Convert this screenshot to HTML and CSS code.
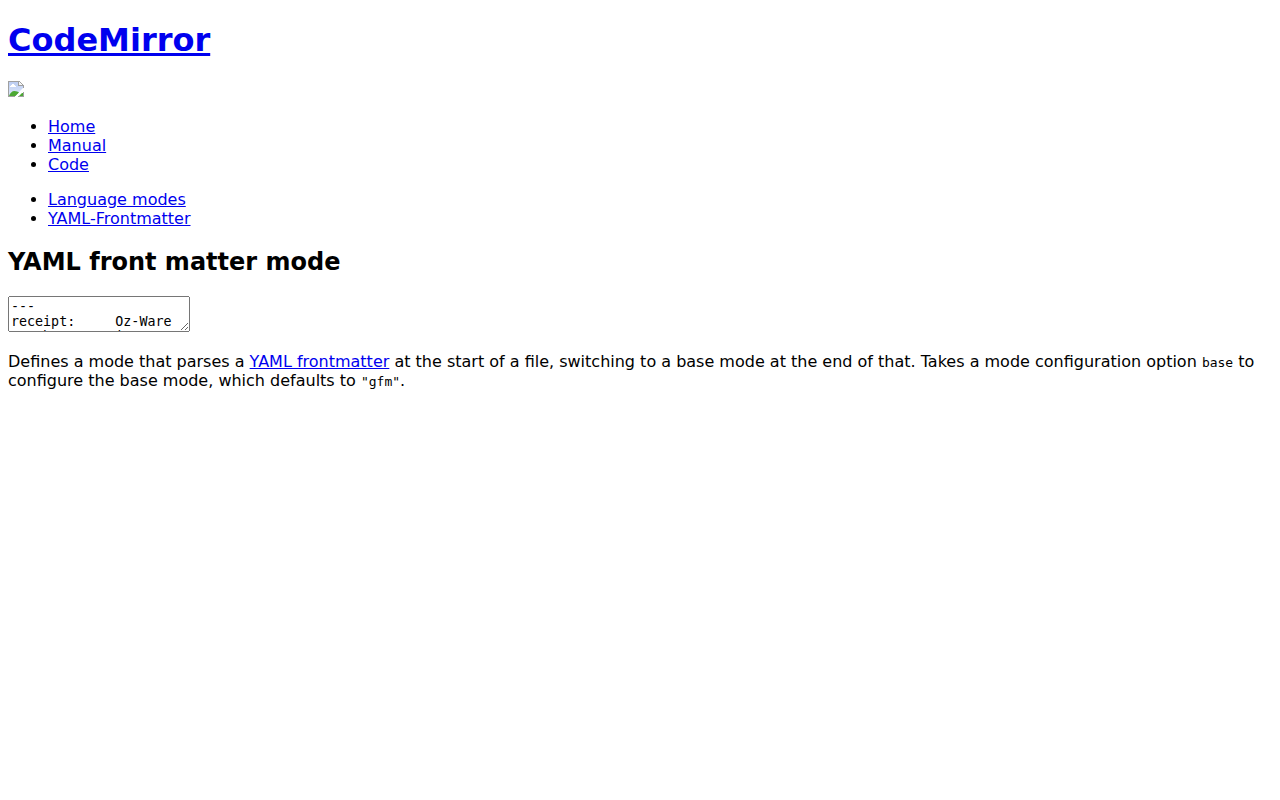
FILE: index.html
```html
<!DOCTYPE html>
<html lang="en">
<head>
<meta charset="utf-8">
<title>CodeMirror: YAML front matter mode</title>
<link rel="stylesheet" href="styles.css">
</head>
<body class="page">
<nav>
  <h1 class="title"><a href="#home">CodeMirror</a></h1>
  <a href="#home" aria-label="Home"><svg class="logo" viewBox="0 0 16 16" aria-hidden="true">
    <defs>
      <linearGradient id="sky" x1="0" y1="0" x2="0" y2="1">
        <stop offset="0" stop-color="#bccdf2"/>
        <stop offset="1" stop-color="#dde7fa"/>
      </linearGradient>
    </defs>
    <path fill="url(#sky)" d="M1 1h10v4h4v2l-8 8H1z"/>
    <path fill="#fff" d="M2 6V5h1V4h1V3h2v1h1v1h1v1z"/>
    <path fill="#4ca833" d="M1 15c1-3 3-5 5.500-5 2 0 3.500.8 4.500 1.500L7.500 15z"/>
    <path fill="#fff" d="M7 16l9-9v3l-6 6z"/>
    <path fill="#f4f4f4" d="M11 1l4 4h-4z"/>
    <path fill="#a0a0a0" d="M0 0h12v1H1v14h6v1H0zM10 1h1v3h4v1h-5zM12 1h1v1h1v1h1v1h1v3h-1V4h-1V3h-1V2h-1z"/>
    <path fill="#4ca833" d="M11 15l3-3h1v3z"/>
    <path fill="#a0a0a0" d="M15 11h1v5h-6v-1h5z"/>
  </svg></a>
  <ul class="links">
    <li><a href="#home">Home</a></li>
    <li><a href="#manual">Manual</a></li>
    <li><a href="#code">Code</a></li>
  </ul>
  <ul class="links">
    <li><a href="#modes">Language modes</a></li>
    <li><a href="#yaml">YAML-Frontmatter</a></li>
  </ul>
</nav>
<article>
  <h2 class="heading">YAML front matter mode</h2>
  <form><textarea class="code-input" name="code" aria-label="Code">---
receipt:     Oz-Ware Purchase Invoice
date:        2007-08-06
customer:
    given:   Dorothy
    family:  Gale
---
</textarea></form>
  <p class="text">Defines a mode that parses a <a href="#frontmatter">YAML frontmatter</a> at the start of a file, switching to a base mode at the end of that. Takes a mode configuration option <code class="code">base</code> to configure the base mode, which defaults to <code class="code">"gfm"</code>.</p>
</article>
</body>
</html>
```
FILE: styles.css
```css
.page {
  margin: 0;
  padding: 0 8px;
  background: #fff;
  color: #000;
  font-family: "DejaVu Sans", sans-serif;
  font-size: 16px;
}

.page a {
  color: #0000ee;
}

.title {
  margin: 21px 0 22px;
  font-size: 32px;
}

.logo {
  width: 16px;
  height: 16px;
}

.links {
  margin: 16px 0;
  padding-left: 40px;
}

.heading {
  margin: 20px 0;
  font-size: 24px;
}

.code-input {
  font-family: "DejaVu Sans Mono", monospace;
}

.text {
  margin: 16px 0;
}

.code {
  font-family: "DejaVu Sans Mono", monospace;
  font-size: 13px;
}
```
